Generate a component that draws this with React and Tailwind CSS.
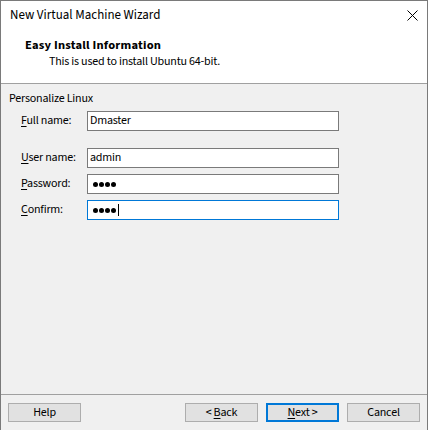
export default function App() {
  const Dots = ({ caret }) => (
    <div className="flex items-center h-full pl-[5px] gap-[1px]">
      {[0, 1, 2, 3].map((i) => (
        <span key={i} className="block w-[5px] h-[5px] rounded-full bg-black" />
      ))}
      {caret && <span className="block w-[1px] h-[12px] bg-black ml-[1px]" />}
    </div>
  );

  const Row = ({ u, rest, children, focused, className = "" }) => (
    <div className={`flex items-center pl-[20px] ${className}`}>
      <div className="w-[66px] leading-[16px]">
        <span className="underline underline-offset-2">{u}</span>
        {rest}
      </div>
      <div
        className={`w-[252px] h-[20px] bg-white border ${
          focused ? "border-[#0078d7]" : "border-[#7a7a7a]"
        }`}
      >
        {children}
      </div>
    </div>
  );

  const Btn = ({ children, primary }) => (
    <div
      className={`w-[73px] h-[19px] bg-[#e1e1e1] flex items-center justify-center leading-[16px] ${
        primary ? "border-2 border-[#0078d7]" : "border border-[#adadad]"
      }`}
    >
      {children}
    </div>
  );

  return (
    <div className="w-[428px] h-[430px] overflow-hidden bg-[#f0f0f0] border-l border-r border-t border-[#7a7a7a] flex flex-col text-[12px] tracking-[-0.2px] text-black font-['Source_Sans_3',Lato,sans-serif]">
      <div className="bg-white border-b border-[#a0a0a0] h-[83px] shrink-0">
        <div className="h-[30px] flex items-start justify-between pl-[9px] pr-[9px]">
          <span className="leading-[16px] mt-[6px] text-[13px] tracking-normal">New Virtual Machine Wizard</span>
          <svg width="11" height="11" viewBox="0 0 11 11" className="mt-[9px]">
            <path d="M0.5 0.5 L10.5 10.5 M10.5 0.5 L0.5 10.5" stroke="#000" strokeWidth="1" />
          </svg>
        </div>
        <div className="pl-[24px] pt-[6px] font-bold text-[12.5px] tracking-[0.2px] leading-[16px]">Easy Install Information</div>
        <div className="pl-[48px] pt-[1px] leading-[16px]">This is used to install Ubuntu 64-bit.</div>
      </div>

      <div className="flex-1 pt-[7px]">
        <div className="pl-[8px] leading-[16px]">Personalize Linux</div>
        <Row u="F" rest="ull name:" className="mt-[4px]">
          <div className="pl-[2px] leading-[18px]">Dmaster</div>
        </Row>
        <Row u="U" rest="ser name:" className="mt-[17px]">
          <div className="pl-[2px] leading-[18px]">admin</div>
        </Row>
        <Row u="P" rest="assword:" className="mt-[6px]">
          <Dots />
        </Row>
        <Row u="C" rest="onfirm:" className="mt-[6px]" focused>
          <Dots caret />
        </Row>
      </div>

      <div className="h-[36px] shrink-0 border-t border-[#a0a0a0] flex items-start pt-[8px] pl-[7px] pr-[7px]">
        <Btn>Help</Btn>
        <div className="flex-1" />
        <div className="flex gap-[8px]">
          <Btn>
            &lt;&nbsp;<span className="underline underline-offset-2">B</span>ack
          </Btn>
          <Btn primary>
            <span className="underline underline-offset-2">N</span>ext&nbsp;&gt;
          </Btn>
          <Btn>Cancel</Btn>
        </div>
      </div>
    </div>
  );
}
